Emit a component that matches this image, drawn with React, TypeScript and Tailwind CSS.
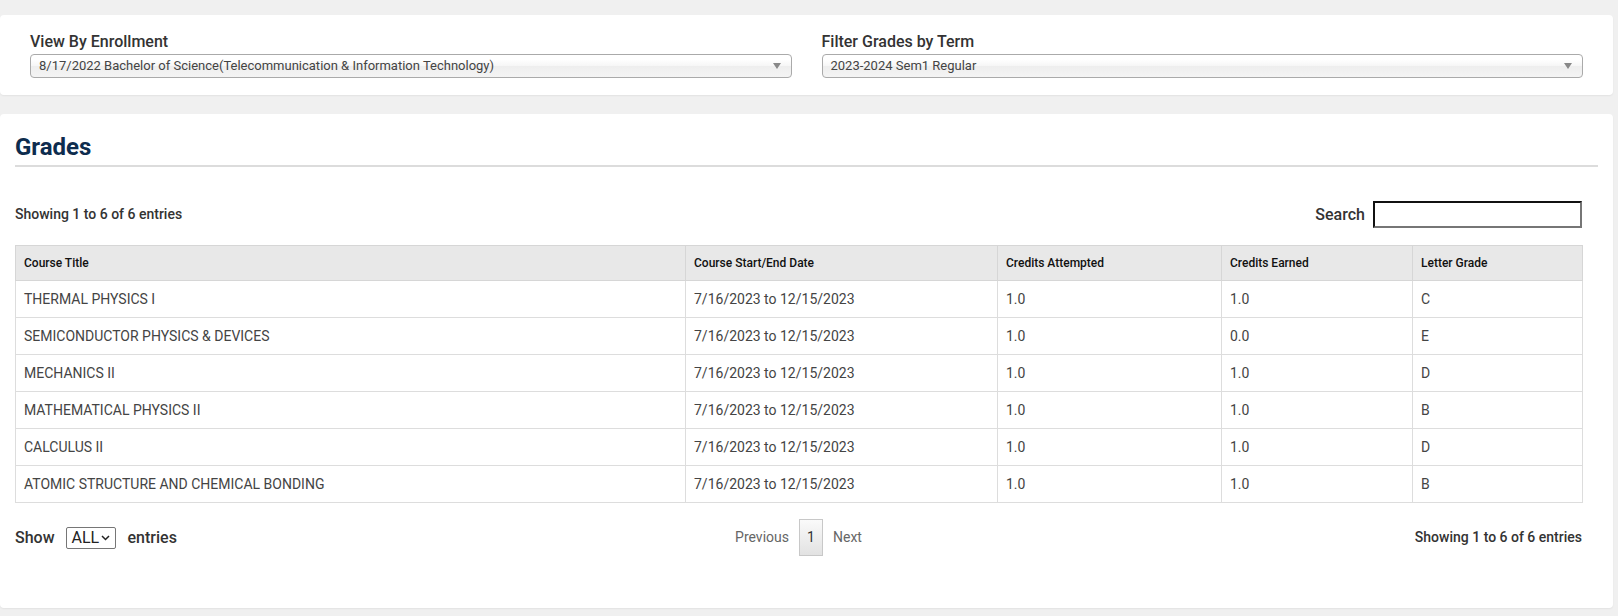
import { useState } from 'react';

const rows = [
  { title: 'THERMAL PHYSICS I', earned: '1.0', grade: 'C' },
  { title: 'SEMICONDUCTOR PHYSICS & DEVICES', earned: '0.0', grade: 'E' },
  { title: 'MECHANICS II', earned: '1.0', grade: 'D' },
  { title: 'MATHEMATICAL PHYSICS II', earned: '1.0', grade: 'B' },
  { title: 'CALCULUS II', earned: '1.0', grade: 'D' },
  { title: 'ATOMIC STRUCTURE AND CHEMICAL BONDING', earned: '1.0', grade: 'B' },
];

function FakeSelect({ value }: { value: string }) {
  return (
    <div className="flex h-[24px] items-center justify-between rounded-[4px] border border-[#aaa] bg-[linear-gradient(180deg,#ffffff_20%,#f6f6f6_50%,#eeeeee_52%,#f4f4f4_100%)] pl-[8px] pr-[10px] shadow-[0_1px_0_#fff_inset]">
      <span className="text-[13px] text-[#444]">{value}</span>
      <svg width="8" height="6" viewBox="0 0 8 6" className="text-[#888]">
        <path d="M0 0h8L4 6z" fill="currentColor" />
      </svg>
    </div>
  );
}

export default function App() {
  const [search, setSearch] = useState('');

  return (
    <div className="min-h-[616px] bg-[#f0f0f0] pt-[15px] font-['Roboto',sans-serif] text-[#333]">
      <section className="mr-[5px] rounded-[4px] bg-white px-[30px] pb-[17px] pt-[17px] shadow-[0_1px_2px_rgba(0,0,0,0.06)]">
        <div className="grid grid-cols-2 gap-[30px]">
          <div>
            <label className="mb-[2px] block text-[16px] font-medium leading-[20px] text-[#333]">View By Enrollment</label>
            <FakeSelect value="8/17/2022 Bachelor of Science(Telecommunication & Information Technology)" />
          </div>
          <div>
            <label className="mb-[2px] block text-[16px] font-medium leading-[20px] text-[#333]">Filter Grades by Term</label>
            <FakeSelect value="2023-2024 Sem1 Regular" />
          </div>
        </div>
      </section>

      <section className="mr-[5px] mt-[19px] rounded-[4px] bg-white pb-[52px] pl-[15px] pr-[31px] pt-[20px] shadow-[0_1px_2px_rgba(0,0,0,0.06)]">
        <div className="mr-[-16px] border-b-2 border-[#dcdcdc] pb-[4px]">
          <h2 className="text-[24px] font-bold leading-[27px] text-[#0d2c4e]">Grades</h2>
        </div>

        <div className="mt-[34px] flex h-[27px] items-center justify-between">
          <p className="text-[14px] font-medium text-[#333]">Showing 1 to 6 of 6 entries</p>
          <label className="flex items-center gap-[8px] text-[16px] font-medium text-[#333]">
            Search
            <input
              value={search}
              onChange={(e) => setSearch(e.target.value)}
              className="h-[27px] w-[209px] border-2 border-b-[#767676] border-l-[#111] border-r-[#767676] border-t-[#111] bg-white px-[4px] text-[14px] outline-none"
            />
          </label>
        </div>

        <table className="mt-[17px] w-[1567px] table-fixed border-collapse text-left">
          <colgroup>
            <col className="w-[670px]" />
            <col className="w-[312px]" />
            <col className="w-[224px]" />
            <col className="w-[191px]" />
            <col className="w-[170px]" />
          </colgroup>
          <thead>
            <tr className="h-[35px] bg-[#e8e8e8] text-[12px] font-medium text-[#111]">
              <th className="border border-[#d6d6d6] px-[8px] font-medium">Course Title</th>
              <th className="border border-[#d6d6d6] px-[8px] font-medium">Course Start/End Date</th>
              <th className="border border-[#d6d6d6] px-[8px] font-medium">Credits Attempted</th>
              <th className="border border-[#d6d6d6] px-[8px] font-medium">Credits Earned</th>
              <th className="border border-[#d6d6d6] px-[8px] font-medium">Letter Grade</th>
            </tr>
          </thead>
          <tbody>
            {rows.map((r) => (
              <tr key={r.title} className="h-[37px] text-[14px] text-[#444]">
                <td className="border border-[#dddddd] px-[8px]">{r.title}</td>
                <td className="border border-[#dddddd] px-[8px]">7/16/2023 to 12/15/2023</td>
                <td className="border border-[#dddddd] px-[8px]">1.0</td>
                <td className="border border-[#dddddd] px-[8px]">{r.earned}</td>
                <td className="border border-[#dddddd] px-[8px]">{r.grade}</td>
              </tr>
            ))}
          </tbody>
        </table>

        <div className="mt-[16px] grid h-[37px] grid-cols-3 items-center">
          <div className="flex items-center text-[16px] font-medium text-[#333]">
            <span>Show</span>
            <div className="ml-[11px] mr-[12px] flex h-[22px] w-[50px] items-center gap-[2px] rounded-[2px] border border-[#767676] pl-[5px] text-[16px] font-normal text-[#222]">
              ALL
              <svg width="9" height="6" viewBox="0 0 9 6">
                <path d="M1 1l3.5 3.5L8 1" fill="none" stroke="#222" strokeWidth="1.5" />
              </svg>
            </div>
            <span>entries</span>
          </div>
          <div className="flex items-center justify-center gap-[10px] text-[14px] text-[#666]">
            <span>Previous</span>
            <span className="flex h-[37px] w-[24px] items-center justify-center border border-[#c8c8c8] bg-[linear-gradient(180deg,#fafafa_0%,#e2e2e2_100%)] text-[#333]">1</span>
            <span>Next</span>
          </div>
          <p className="text-right text-[14px] font-medium text-[#333]">Showing 1 to 6 of 6 entries</p>
        </div>
      </section>
    </div>
  );
}
